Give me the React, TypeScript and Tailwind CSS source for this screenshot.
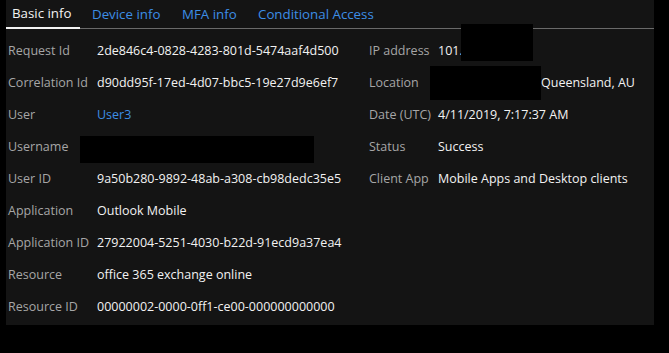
import React from "react";

const font = { fontFamily: '"Open Sans", "Noto Sans", sans-serif' };

type Row = { l: string; v: React.ReactNode; rl?: string; rv?: React.ReactNode };

const rows: Row[] = [
  {
    l: "Request Id",
    v: "2de846c4-0828-4283-801d-5474aaf4d500",
    rl: "IP address",
    rv: (
      <span className="relative">
        101.
        <span className="absolute left-[23px] top-[-18px] w-[72px] h-[37px] bg-black" />
      </span>
    ),
  },
  {
    l: "Correlation Id",
    v: "d90dd95f-17ed-4d07-bbc5-19e27d9e6ef7",
    rl: "Location",
    rv: (
      <span className="flex items-center -ml-[8px]">
        <span className="w-[111px] h-[34px] bg-black" />
        <span>Queensland, AU</span>
      </span>
    ),
  },
  { l: "User", v: <span className="text-[#3d8ee6]">User3</span>, rl: "Date (UTC)", rv: "4/11/2019, 7:17:37 AM" },
  {
    l: "Username",
    v: <span className="block -ml-[17px] mt-[5px] w-[234px] h-[27px] bg-black" />,
    rl: "Status",
    rv: "Success",
  },
  { l: "User ID", v: "9a50b280-9892-48ab-a308-cb98dedc35e5", rl: "Client App", rv: "Mobile Apps and Desktop clients" },
  { l: "Application", v: "Outlook Mobile" },
  { l: "Application ID", v: "27922004-5251-4030-b22d-91ecd9a37ea4" },
  { l: "Resource", v: "office 365 exchange online" },
  { l: "Resource ID", v: "00000002-0000-0ff1-ce00-000000000000" },
];

export default function App() {
  return (
    <div className="w-[669px] h-[353px] bg-black" style={font}>
      <div className="ml-[6px] w-[648px] h-[325px] bg-[#141414] flex flex-col">
        <div className="flex items-end gap-[6px] h-[29px] border-b border-[#6a6a6a] text-[13.3px] whitespace-nowrap">
          <div className="h-[28px] pl-[6px] w-[74px] flex items-center text-[#f2f2f2] border-b-2 border-[#f2f2f2] mb-[-1px]">
            Basic info
          </div>
          <div className="h-[27px] pl-[6px] w-[84px] flex items-center text-[#3d8ee6]">Device info</div>
          <div className="h-[27px] pl-[6px] w-[70px] flex items-center text-[#3d8ee6]">MFA info</div>
          <div className="h-[27px] pl-[6px] flex items-center text-[#3d8ee6]">Conditional Access</div>
        </div>
        <div className="pt-[6px] grid grid-cols-[89px_272px_69px_1fr] pl-[2px] text-[12.5px]">
          {rows.map((r, i) => (
            <React.Fragment key={i}>
              <div className="h-[32px] flex items-center text-[#a6a6a6] whitespace-nowrap">{r.l}</div>
              <div className="h-[32px] flex items-center text-[#f2f2f2] whitespace-nowrap">{r.v}</div>
              <div className="h-[32px] flex items-center text-[#a6a6a6] whitespace-nowrap">{r.rl ?? ""}</div>
              <div className="h-[32px] flex items-center text-[#f2f2f2] whitespace-nowrap">{r.rv ?? ""}</div>
            </React.Fragment>
          ))}
        </div>
      </div>
    </div>
  );
}
